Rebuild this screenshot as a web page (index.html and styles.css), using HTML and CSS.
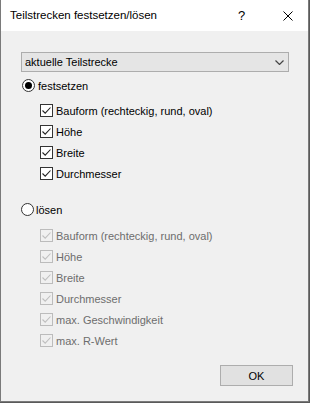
FILE: index.html
```html
<!DOCTYPE html>
<html lang="de">
<head>
<meta charset="utf-8">
<title>Teilstrecken festsetzen/lösen</title>
<link rel="stylesheet" href="styles.css">
</head>
<body>
<div class="window">
  <div class="titlebar">
    <span class="title">Teilstrecken festsetzen/lösen</span>
    <span class="help">?</span>
    <svg class="close" width="10" height="10" viewBox="0 0 10 10"><path d="M0.5 0.5 L9.5 9.5 M9.5 0.5 L0.5 9.5" stroke="#000" stroke-width="1" fill="none"/></svg>
  </div>
  <div class="content">
    <div class="select">
      <span>aktuelle Teilstrecke</span>
      <svg class="chev" width="9" height="5" viewBox="0 0 9 5"><path d="M0.5 0.5 L4.5 4.5 L8.5 0.5" stroke="#444" stroke-width="1.2" fill="none"/></svg>
    </div>

    <div class="radio-row first">
      <span class="radio checked"><span class="dot"></span></span>
      <span class="label">festsetzen</span>
    </div>
    <div class="group">
      <div class="cb-row"><span class="cb"><svg width="11" height="11" viewBox="0 0 11 11"><path d="M1.5 5.5 L4.2 8.2 L9.5 2.5" stroke="#222" stroke-width="1.1" fill="none"/></svg></span><span class="label">Bauform (rechteckig, rund, oval)</span></div>
      <div class="cb-row"><span class="cb"><svg width="11" height="11" viewBox="0 0 11 11"><path d="M1.5 5.5 L4.2 8.2 L9.5 2.5" stroke="#222" stroke-width="1.1" fill="none"/></svg></span><span class="label">Höhe</span></div>
      <div class="cb-row"><span class="cb"><svg width="11" height="11" viewBox="0 0 11 11"><path d="M1.5 5.5 L4.2 8.2 L9.5 2.5" stroke="#222" stroke-width="1.1" fill="none"/></svg></span><span class="label">Breite</span></div>
      <div class="cb-row"><span class="cb"><svg width="11" height="11" viewBox="0 0 11 11"><path d="M1.5 5.5 L4.2 8.2 L9.5 2.5" stroke="#222" stroke-width="1.1" fill="none"/></svg></span><span class="label">Durchmesser</span></div>
    </div>

    <div class="radio-row second">
      <span class="radio"></span>
      <span class="label tight">lösen</span>
    </div>
    <div class="group disabled">
      <div class="cb-row"><span class="cb"><svg width="11" height="11" viewBox="0 0 11 11"><path d="M1.5 5.5 L4.2 8.2 L9.5 2.5" stroke="#bfbfbf" stroke-width="1.1" fill="none"/></svg></span><span class="label">Bauform (rechteckig, rund, oval)</span></div>
      <div class="cb-row"><span class="cb"><svg width="11" height="11" viewBox="0 0 11 11"><path d="M1.5 5.5 L4.2 8.2 L9.5 2.5" stroke="#bfbfbf" stroke-width="1.1" fill="none"/></svg></span><span class="label">Höhe</span></div>
      <div class="cb-row"><span class="cb"><svg width="11" height="11" viewBox="0 0 11 11"><path d="M1.5 5.5 L4.2 8.2 L9.5 2.5" stroke="#bfbfbf" stroke-width="1.1" fill="none"/></svg></span><span class="label">Breite</span></div>
      <div class="cb-row"><span class="cb"><svg width="11" height="11" viewBox="0 0 11 11"><path d="M1.5 5.5 L4.2 8.2 L9.5 2.5" stroke="#bfbfbf" stroke-width="1.1" fill="none"/></svg></span><span class="label">Durchmesser</span></div>
      <div class="cb-row"><span class="cb"><svg width="11" height="11" viewBox="0 0 11 11"><path d="M1.5 5.5 L4.2 8.2 L9.5 2.5" stroke="#bfbfbf" stroke-width="1.1" fill="none"/></svg></span><span class="label">max. Geschwindigkeit</span></div>
      <div class="cb-row"><span class="cb"><svg width="11" height="11" viewBox="0 0 11 11"><path d="M1.5 5.5 L4.2 8.2 L9.5 2.5" stroke="#bfbfbf" stroke-width="1.1" fill="none"/></svg></span><span class="label">max. R-Wert</span></div>
    </div>

    <div class="buttons">
      <div class="btn">OK</div>
    </div>
  </div>
</div>
</body>
</html>
```

FILE: styles.css
```css
* { box-sizing: border-box; }
html, body {
  margin: 0;
  padding: 0;
  background: #5a5a5a;
}
body {
  width: 310px;
  height: 403px;
  overflow: hidden;
  font-family: "Liberation Sans", Arial, sans-serif;
  font-size: 11px;
  color: #000;
}
.window {
  width: 309px;
  height: 402px;
  background: #f0f0f0;
  border-left: 1px solid #7a7a7a;
  border-right: 1px solid #7a7a7a;
  border-bottom: 1px solid #7a7a7a;
  display: flex;
  flex-direction: column;
}
.titlebar {
  height: 31px;
  background: #fff;
  display: flex;
  align-items: center;
  padding-left: 9px;
  flex: none;
}
.title {
  font-size: 11.5px;
  line-height: 31px;
  flex: 1;
}
.help {
  font-size: 13px;
  width: 10px;
  margin-right: 35px;
}
.close {
  margin-right: 15px;
  display: block;
}
.content {
  flex: 1;
  padding: 21px 15px 0 20px;
  display: flex;
  flex-direction: column;
}
.select {
  height: 20px;
  width: 268px;
  background: #e5e5e5;
  border: 1px solid #adadad;
  display: flex;
  align-items: center;
  padding-left: 3px;
  padding-right: 3px;
}
.select span { flex: 1; }
.chev { display: block; margin-right: 1px; }

.radio-row {
  height: 21px;
  display: flex;
  align-items: center;
}
.radio-row.first { margin-top: 3px; padding-left: 1px; }
.radio-row.second { margin-top: 15px; }
.radio {
  width: 13px;
  height: 13px;
  border: 1px solid #333;
  border-radius: 50%;
  background: #fff;
  display: flex;
  align-items: center;
  justify-content: center;
  margin-right: 3px;
  flex: none;
}
.radio .dot {
  width: 7px;
  height: 7px;
  border-radius: 50%;
  background: #000;
}
.label.tight { margin-left: -1px; }

.group { padding-left: 19px; margin-top: 4px; }
.group.disabled { margin-top: 5px; color: #6d6d6d; }
.cb-row {
  height: 21px;
  display: flex;
  align-items: center;
}
.cb {
  width: 13px;
  height: 13px;
  border: 1px solid #333;
  background: #fff;
  margin-right: 3px;
  flex: none;
  display: flex;
}
.cb svg { display: block; }
.group.disabled .cb { border-color: #bcbcbc; background: #f0f0f0; }

.buttons {
  margin-top: 14px;
  display: flex;
  justify-content: flex-end;
}
.btn {
  width: 73px;
  height: 21px;
  background: #e1e1e1;
  border: 1px solid #adadad;
  display: flex;
  align-items: center;
  justify-content: center;
}
```
